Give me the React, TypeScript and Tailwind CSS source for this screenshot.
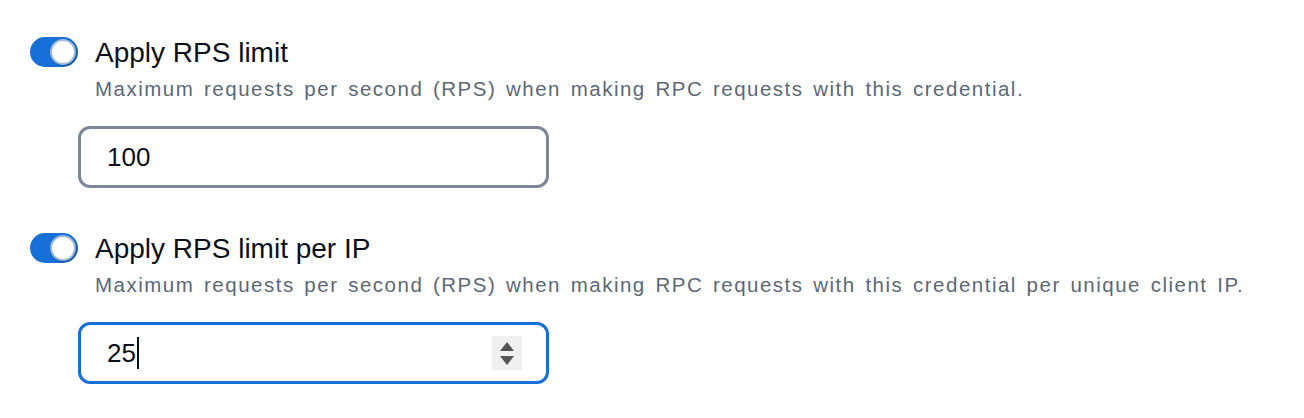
import React from 'react';

interface LimitRowProps {
  label: string;
  description: string;
  value: string;
  focused?: boolean;
}

function Toggle() {
  return (
    <div className="relative w-[48px] h-[30px] shrink-0 rounded-full bg-[#1670d8]">
      <div className="absolute right-[2px] top-[2px] w-[26px] h-[26px] rounded-full bg-white border-[2px] border-[#0f4f9e]/40 shadow-[1px_1px_2px_rgba(0,0,0,0.35)]" />
    </div>
  );
}

function LimitRow({ label, description, value, focused = false }: LimitRowProps) {
  return (
    <div className="flex flex-col">
      <div className="flex items-start gap-[17px]">
        <Toggle />
        <div className="flex flex-col">
          <div className="text-[28px] leading-[32px] text-[#0b0f19]">{label}</div>
          <div className="text-[20.5px] leading-[24px] tracking-[1.5px] [word-spacing:2.5px] text-[#5c6878] mt-[8px]">{description}</div>
        </div>
      </div>
      <div
        className={`mt-[25px] ml-[48px] w-[471px] h-[62px] rounded-[12px] border-[3px] bg-white flex items-center pl-[26px] pr-[24px] ${
          focused ? 'border-[#1670d8]' : 'border-[#7d8797]'
        }`}
      >
        <span className="text-[26px] text-[#0b0f19]">{value}</span>
        {focused && <span className="w-[2px] h-[32px] bg-[#0b0f19] ml-[1px]" />}
        {focused && (
          <div className="ml-auto w-[30px] h-[34px] bg-[#f0f0f0] flex flex-col items-center justify-center gap-[5px]">
            <svg width="14" height="9" viewBox="0 0 14 9"><path d="M7 0 L14 9 L0 9 Z" fill="#555" /></svg>
            <svg width="14" height="9" viewBox="0 0 14 9"><path d="M0 0 L14 0 L7 9 Z" fill="#555" /></svg>
          </div>
        )}
      </div>
    </div>
  );
}

export default function App() {
  return (
    <div className="w-[1304px] h-[418px] bg-white pl-[30px] pt-[37px] flex flex-col gap-[45px] font-['Liberation_Sans',Arial,sans-serif]">
      <LimitRow
        label="Apply RPS limit"
        description="Maximum requests per second (RPS) when making RPC requests with this credential."
        value="100"
      />
      <LimitRow
        label="Apply RPS limit per IP"
        description="Maximum requests per second (RPS) when making RPC requests with this credential per unique client IP."
        value="25"
        focused
      />
    </div>
  );
}
